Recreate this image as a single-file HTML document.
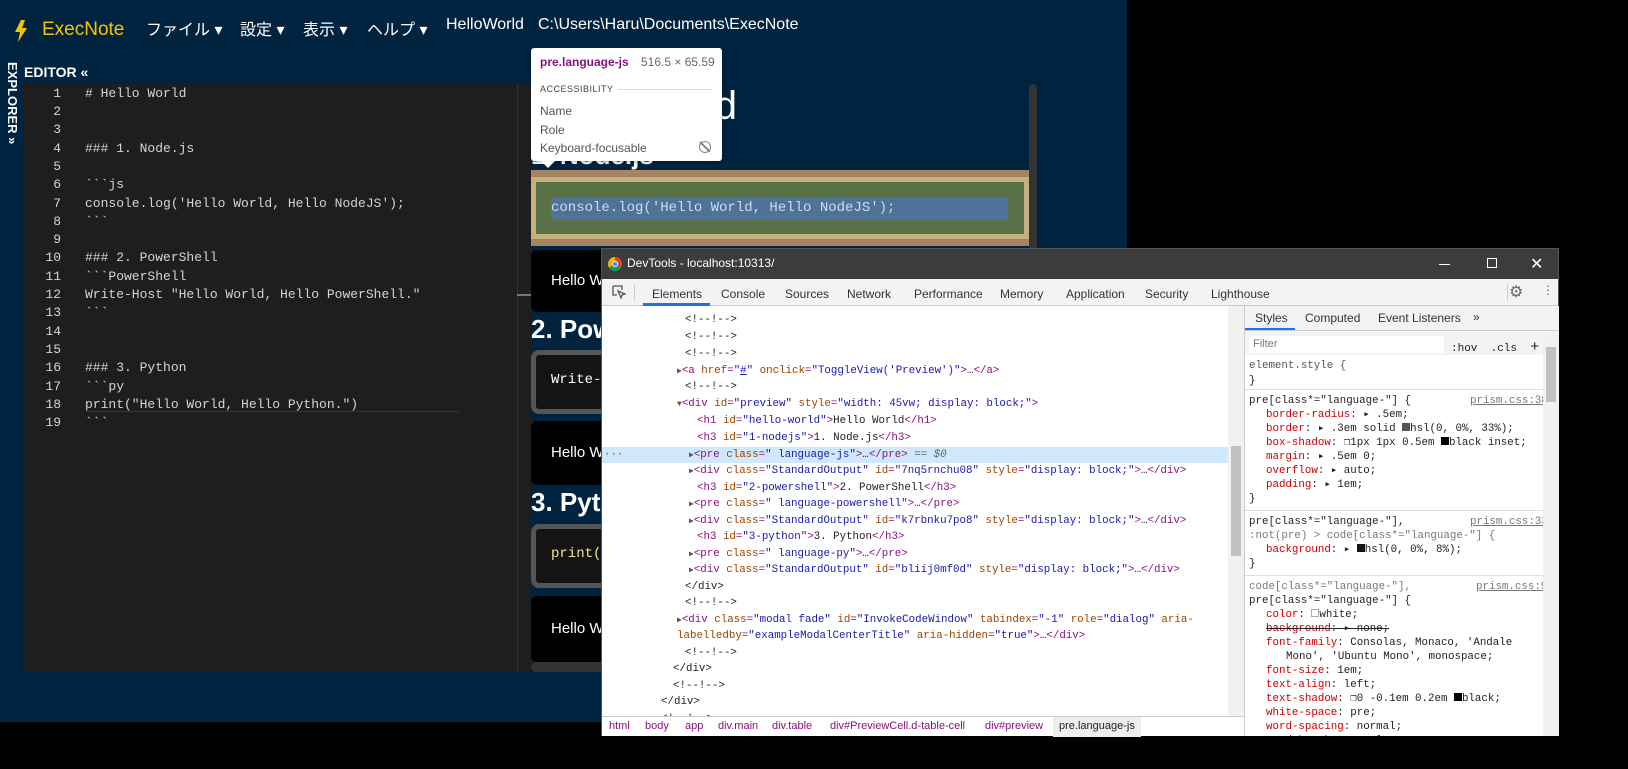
<!DOCTYPE html>
<html><head><meta charset="utf-8"><style>
*{margin:0;padding:0;box-sizing:border-box}
body{width:1628px;height:769px;background:#000;position:relative;overflow:hidden;font-family:"Liberation Sans","Noto Sans CJK JP",sans-serif}
.a{position:absolute}
.mono{font-family:"Liberation Mono","DejaVu Sans Mono",monospace}
#app{left:0;top:0;width:1127px;height:722px;background:#002340}
.nav{color:#fff;font-size:16px;top:16px}
.ln{color:#858585;width:37px;text-align:right;left:0}
.ed div{position:absolute;font-size:13px;color:#d4d4d4;white-space:pre}
.el div{position:absolute;white-space:pre;font-size:10.8px;color:#222;line-height:16px}
.t{color:#881280}.n{color:#994500}.v{color:#1a1aa6}.c{color:#236e25}
.tri{color:#555;font-size:8px}
.st div{position:absolute;white-space:pre;font-size:10.8px;color:#222;line-height:14px;height:14px}
.p{color:#c80000}
.tabs span{position:absolute;top:8px;font-size:12px;color:#333}
</style></head><body>
<div id="app" class="a">
  <svg class="a" style="left:14px;top:20px" width="14" height="22" viewBox="0 0 14 22"><path d="M7 0 L1 12 L6 12 L4 22 L13 8 L8 8 L11 0Z" fill="#f5c400"/></svg>
  <div class="a" style="left:42px;top:19px;font-size:19px;color:#f5c400">ExecNote</div>
  <div class="a nav" style="left:146px">ファイル ▾</div>
  <div class="a nav" style="left:240px">設定 ▾</div>
  <div class="a nav" style="left:303px">表示 ▾</div>
  <div class="a nav" style="left:367px">ヘルプ ▾</div>
  <div class="a nav" style="left:446px">HelloWorld</div>
  <div class="a nav" style="left:538px">C:\Users\Haru\Documents\ExecNote</div>
  <div class="a" style="left:24px;top:64px;color:#fff;font-weight:bold;font-size:14px">EDITOR «</div>
  <div class="a" style="left:2px;top:62px;width:18px;color:#fff;font-weight:bold;font-size:13px;writing-mode:vertical-rl">EXPLORER »</div>
  <div class="a ed mono" style="left:24px;top:84px;width:507px;height:588px;background:#1e1e1e">
    <div class="a" style="left:493px;top:0;width:1px;height:588px;background:#333"></div>
    <div class="a" style="left:62px;top:327px;width:374px;height:1px;background:#333"></div>
    <div class="a" style="left:493px;top:210px;width:14px;height:2px;background:#777"></div>
  </div>
  <div class="a ed mono" style="left:24px;top:84px">
    <div class="ln" style="top:2px">1</div><div class="ln" style="top:20px">2</div><div class="ln" style="top:38px">3</div><div class="ln" style="top:57px">4</div><div class="ln" style="top:75px">5</div><div class="ln" style="top:93px">6</div><div class="ln" style="top:112px">7</div><div class="ln" style="top:130px">8</div><div class="ln" style="top:148px">9</div><div class="ln" style="top:166px">10</div><div class="ln" style="top:185px">11</div><div class="ln" style="top:203px">12</div><div class="ln" style="top:221px">13</div><div class="ln" style="top:240px">14</div><div class="ln" style="top:258px">15</div><div class="ln" style="top:276px">16</div><div class="ln" style="top:295px">17</div><div class="ln" style="top:313px">18</div><div class="ln" style="top:331px">19</div>
    <div style="left:61px;top:2px"># Hello World</div>
    <div style="left:61px;top:57px">### 1. Node.js</div>
    <div style="left:61px;top:93px">&#96;&#96;&#96;js</div>
    <div style="left:61px;top:112px">console.log('Hello World, Hello NodeJS');</div>
    <div style="left:61px;top:130px">&#96;&#96;&#96;</div>
    <div style="left:61px;top:166px">### 2. PowerShell</div>
    <div style="left:61px;top:185px">&#96;&#96;&#96;PowerShell</div>
    <div style="left:61px;top:203px">Write-Host "Hello World, Hello PowerShell."</div>
    <div style="left:61px;top:221px">&#96;&#96;&#96;</div>
    <div style="left:61px;top:276px">### 3. Python</div>
    <div style="left:61px;top:295px">&#96;&#96;&#96;py</div>
    <div style="left:61px;top:313px">print("Hello World, Hello Python.")</div>
    <div style="left:61px;top:331px">&#96;&#96;&#96;</div>
  </div>
  <!-- preview -->
  <div class="a" style="left:531px;top:84px;width:509px;height:588px;overflow:hidden">
    <div class="a" style="left:0;top:0;color:#fff;font-size:40px">Hello World</div>
    <div class="a" style="left:0;top:56px;color:#fff;font-size:26px;font-weight:bold">1. Node.js</div>
    <div class="a" style="left:0;top:86px;width:498px;height:76px;background:#a48461"></div>
    <div class="a" style="left:0;top:93px;width:498px;height:62px;background:#c5b17f"></div>
    <div class="a" style="left:5px;top:98px;width:488px;height:52px;background:#5a7148"></div>
    <div class="a mono" style="left:20px;top:113px;width:457px;height:23px;background:#4f7398;color:#cde;font-size:14px;line-height:23px">console.log('Hello World, Hello NodeJS');</div>
    <div class="a" style="left:0;top:166px;width:498px;height:62px;background:#000;border-radius:6px;color:#fff;font-size:15px;padding:22px 20px">Hello World, Hello NodeJS</div>
    <div class="a" style="left:0;top:230px;color:#fff;font-size:26px;font-weight:bold">2. PowerShell</div>
    <div class="a mono" style="left:0;top:266px;width:498px;height:64px;background:#141414;border:5px solid #555;border-radius:8px;color:#fff;font-size:14px;padding:17px 15px">Write-Host "Hello World, Hello PowerShell."</div>
    <div class="a" style="left:0;top:337px;width:498px;height:64px;background:#000;border-radius:6px;color:#fff;font-size:15px;padding:23px 20px">Hello World, Hello PowerShell.</div>
    <div class="a" style="left:0;top:403px;color:#fff;font-size:26px;font-weight:bold">3. Python</div>
    <div class="a mono" style="left:0;top:440px;width:498px;height:64px;background:#141414;border:5px solid #555;border-radius:8px;color:#f0e68c;font-size:14px;padding:17px 15px">print("Hello World, Hello Python.")</div>
    <div class="a" style="left:0;top:512px;width:498px;height:66px;background:#000;border-radius:6px;color:#fff;font-size:15px;padding:24px 20px">Hello World, Hello Python.</div>
    <div class="a" style="left:0;top:578px;width:498px;height:10px;background:#333;border-radius:5px"></div>
    <div class="a" style="left:498px;top:0;width:8px;height:170px;background:#333;border-radius:4px"></div>
  </div>
  <!-- tooltip -->
  <div class="a" style="left:531px;top:48px;width:191px;height:113px;background:#fff;border-radius:3px;box-shadow:0 1px 4px rgba(0,0,0,.3)">
    <div class="a" style="left:9px;top:7px;font-size:12px;font-weight:bold;color:#881280">pre.language-js</div>
    <div class="a" style="left:110px;top:7px;font-size:12px;color:#666">516.5 × 65.59</div>
    <div class="a" style="left:9px;top:36px;font-size:9px;color:#444;letter-spacing:.5px">ACCESSIBILITY</div>
    <div class="a" style="left:87px;top:41px;width:95px;height:1px;background:#ddd"></div>
    <div class="a" style="left:9px;top:56px;font-size:12px;color:#555">Name</div>
    <div class="a" style="left:9px;top:75px;font-size:12px;color:#555">Role</div>
    <div class="a" style="left:9px;top:93px;font-size:12px;color:#555">Keyboard-focusable</div>
    <div class="a" style="left:168px;top:93px;width:12px;height:12px;border:1.5px solid #888;border-radius:50%"></div>
    <div class="a" style="left:173px;top:92px;width:1.5px;height:14px;background:#888;transform:rotate(-45deg)"></div>
    <div class="a" style="left:10px;top:113px;width:0;height:0;border-left:7px solid transparent;border-right:7px solid transparent;border-top:7px solid #fff"></div>
  </div>
</div>
<!-- devtools -->
<div class="a" style="left:601px;top:248px;width:958px;height:488px;background:#fff;border:1px solid #555">
  <div class="a" style="left:0;top:0;width:956px;height:30px;background:#3c3c3c">
    <div class="a" style="left:6px;top:8px;width:14px;height:14px;border-radius:50%;background:conic-gradient(#db4437 0 120deg,#0f9d58 120deg 240deg,#f4b400 240deg)"></div>
    <div class="a" style="left:10px;top:12px;width:6px;height:6px;border-radius:50%;background:#4285f4;border:1px solid #fff"></div>
    <div class="a" style="left:25px;top:7px;color:#fff;font-size:12px">DevTools - localhost:10313/</div>
    <div class="a" style="left:837px;top:15px;width:11px;height:1px;background:#fff"></div>
    <div class="a" style="left:885px;top:9px;width:10px;height:10px;border:1px solid #fff"></div>
    <div class="a" style="left:928px;top:5px;color:#fff;font-size:16px">✕</div>
  </div>
  <div class="a tabs" style="left:0;top:30px;width:956px;height:27px;background:#f3f3f3;border-bottom:1px solid #ccc">
    <svg class="a" style="left:10px;top:6px" width="14" height="14"><path d="M1 1h9v4M1 1v9h4M6 6l7 3-3 1-1 3z" fill="none" stroke="#555" stroke-width="1.3"/></svg>
    <div class="a" style="left:32px;top:5px;width:1px;height:17px;background:#ccc"></div>
    <span style="left:50px">Elements</span><div class="a" style="left:41px;top:24px;width:67px;height:3px;background:#1a73e8"></div>
    <span style="left:119px">Console</span><span style="left:183px">Sources</span><span style="left:245px">Network</span><span style="left:312px">Performance</span><span style="left:398px">Memory</span><span style="left:464px">Application</span><span style="left:543px">Security</span><span style="left:609px">Lighthouse</span>
    <div class="a" style="left:905px;top:5px;width:1px;height:17px;background:#ccc"></div>
    <span style="left:907px;top:3px;font-size:16px;color:#666">⚙</span><span style="left:940px;top:4px;color:#666">⋮</span>
  </div>
  <!-- elements -->
  <div class="a el mono" style="left:0;top:57px;width:626px;height:410px;overflow:hidden">
    <div style="left:0;top:141px;width:626px;height:16px;background:#cfe8fc"></div>
    <div style="left:2px;top:141px;color:#666">···</div>
    <div style="left:83px;top:6px" class="c">&lt;!--!--&gt;</div>
    <div style="left:83px;top:23px" class="c">&lt;!--!--&gt;</div>
    <div style="left:83px;top:40px" class="c">&lt;!--!--&gt;</div>
    <div style="left:75px;top:57px"><span class="tri">▶</span><span class="t">&lt;a</span> <span class="n">href</span><span class="t">=</span><span class="v">"<u>#</u>"</span> <span class="n">onclick</span><span class="t">=</span><span class="v">"ToggleView('Preview')"</span><span class="t">&gt;</span>…<span class="t">&lt;/a&gt;</span></div>
    <div style="left:83px;top:73px" class="c">&lt;!--!--&gt;</div>
    <div style="left:75px;top:90px"><span class="tri">▼</span><span class="t">&lt;div</span> <span class="n">id</span><span class="t">=</span><span class="v">"preview"</span> <span class="n">style</span><span class="t">=</span><span class="v">"width: 45vw; display: block;"</span><span class="t">&gt;</span></div>
    <div style="left:95px;top:107px"><span class="t">&lt;h1</span> <span class="n">id</span><span class="t">=</span><span class="v">"hello-world"</span><span class="t">&gt;</span>Hello World<span class="t">&lt;/h1&gt;</span></div>
    <div style="left:95px;top:124px"><span class="t">&lt;h3</span> <span class="n">id</span><span class="t">=</span><span class="v">"1-nodejs"</span><span class="t">&gt;</span>1. Node.js<span class="t">&lt;/h3&gt;</span></div>
    <div style="left:87px;top:141px"><span class="tri">▶</span><span class="t">&lt;pre</span> <span class="n">class</span><span class="t">=</span><span class="v">" language-js"</span><span class="t">&gt;</span>…<span class="t">&lt;/pre&gt;</span> <span style="color:#666">== <i>$0</i></span></div>
    <div style="left:87px;top:157px"><span class="tri">▶</span><span class="t">&lt;div</span> <span class="n">class</span><span class="t">=</span><span class="v">"StandardOutput"</span> <span class="n">id</span><span class="t">=</span><span class="v">"7nq5rnchu08"</span> <span class="n">style</span><span class="t">=</span><span class="v">"display: block;"</span><span class="t">&gt;</span>…<span class="t">&lt;/div&gt;</span></div>
    <div style="left:95px;top:174px"><span class="t">&lt;h3</span> <span class="n">id</span><span class="t">=</span><span class="v">"2-powershell"</span><span class="t">&gt;</span>2. PowerShell<span class="t">&lt;/h3&gt;</span></div>
    <div style="left:87px;top:190px"><span class="tri">▶</span><span class="t">&lt;pre</span> <span class="n">class</span><span class="t">=</span><span class="v">" language-powershell"</span><span class="t">&gt;</span>…<span class="t">&lt;/pre&gt;</span></div>
    <div style="left:87px;top:207px"><span class="tri">▶</span><span class="t">&lt;div</span> <span class="n">class</span><span class="t">=</span><span class="v">"StandardOutput"</span> <span class="n">id</span><span class="t">=</span><span class="v">"k7rbnku7po8"</span> <span class="n">style</span><span class="t">=</span><span class="v">"display: block;"</span><span class="t">&gt;</span>…<span class="t">&lt;/div&gt;</span></div>
    <div style="left:95px;top:223px"><span class="t">&lt;h3</span> <span class="n">id</span><span class="t">=</span><span class="v">"3-python"</span><span class="t">&gt;</span>3. Python<span class="t">&lt;/h3&gt;</span></div>
    <div style="left:87px;top:240px"><span class="tri">▶</span><span class="t">&lt;pre</span> <span class="n">class</span><span class="t">=</span><span class="v">" language-py"</span><span class="t">&gt;</span>…<span class="t">&lt;/pre&gt;</span></div>
    <div style="left:87px;top:256px"><span class="tri">▶</span><span class="t">&lt;div</span> <span class="n">class</span><span class="t">=</span><span class="v">"StandardOutput"</span> <span class="n">id</span><span class="t">=</span><span class="v">"bliij0mf0d"</span> <span class="n">style</span><span class="t">=</span><span class="v">"display: block;"</span><span class="t">&gt;</span>…<span class="t">&lt;/div&gt;</span></div>
    <div style="left:83px;top:273px" class="t">&lt;/div&gt;</div>
    <div style="left:83px;top:289px" class="c">&lt;!--!--&gt;</div>
    <div style="left:75px;top:306px"><span class="tri">▶</span><span class="t">&lt;div</span> <span class="n">class</span><span class="t">=</span><span class="v">"modal fade"</span> <span class="n">id</span><span class="t">=</span><span class="v">"InvokeCodeWindow"</span> <span class="n">tabindex</span><span class="t">=</span><span class="v">"-1"</span> <span class="n">role</span><span class="t">=</span><span class="v">"dialog"</span> <span class="n">aria-</span></div>
    <div style="left:75px;top:322px"><span class="n">labelledby</span><span class="t">=</span><span class="v">"exampleModalCenterTitle"</span> <span class="n">aria-hidden</span><span class="t">=</span><span class="v">"true"</span><span class="t">&gt;</span>…<span class="t">&lt;/div&gt;</span></div>
    <div style="left:83px;top:339px" class="c">&lt;!--!--&gt;</div>
    <div style="left:71px;top:355px" class="t">&lt;/div&gt;</div>
    <div style="left:71px;top:372px" class="c">&lt;!--!--&gt;</div>
    <div style="left:59px;top:388px" class="t">&lt;/div&gt;</div>
    <div style="left:59px;top:405px" class="c">&lt;!--!--&gt;</div>
  </div>
  <div class="a" style="left:626px;top:57px;width:16px;height:410px;background:#f1f1f1"><div class="a" style="left:3px;top:140px;width:10px;height:110px;background:#c1c1c1"></div></div>
  <div class="a" style="left:0;top:467px;width:642px;height:20px;background:#fff;border-top:1px solid #ccc;font-size:11px;color:#881280">
    <span class="a" style="left:7px;top:3px">html</span><span class="a" style="left:43px;top:3px">body</span><span class="a" style="left:83px;top:3px">app</span><span class="a" style="left:116px;top:3px">div.main</span><span class="a" style="left:170px;top:3px">div.table</span><span class="a" style="left:228px;top:3px">div#PreviewCell.d-table-cell</span><span class="a" style="left:383px;top:3px">div#preview</span>
    <span class="a" style="left:451px;top:0;height:20px;padding:3px 6px;background:#eee;color:#222">pre.language-js</span>
  </div>
  <!-- styles -->
  <div class="a" style="left:642px;top:57px;width:314px;height:430px;border-left:1px solid #ccc;background:#fff">
    <div class="a" style="left:0;top:0;width:314px;height:25px;background:#f3f3f3;border-bottom:1px solid #ccc;font-size:12px;color:#333">
      <span class="a" style="left:10px;top:5px">Styles</span><div class="a" style="left:0;top:22px;width:50px;height:2px;background:#1a73e8"></div>
      <span class="a" style="left:60px;top:5px">Computed</span><span class="a" style="left:133px;top:5px">Event Listeners</span><span class="a" style="left:228px;top:4px">»</span>
    </div>
    <div class="a" style="left:0;top:25px;width:298px;height:24px;background:#f3f3f3"></div>
    <div class="a" style="left:4px;top:30px;width:195px;height:17px;background:#fff;font-size:11px;color:#777;padding:2px 4px">Filter</div>
    <div class="a mono" style="left:206px;top:33px;font-size:11px;color:#222">:hov &nbsp;.cls &nbsp;<span style="font-size:15px">+</span></div>
    <div class="a st mono" style="left:0;top:50px;width:298px;height:380px;overflow:hidden">
      <div style="left:4px;top:3px;color:#555">element.style {</div><div style="left:4px;top:18px">}</div>
      <div style="left:0;top:33px;width:298px;height:1px;background:#ddd"></div>
      <div style="left:4px;top:38px">pre[class*="language-"] {</div><div style="left:225px;top:38px;color:#777;text-decoration:underline">prism.css:38</div>
      <div style="left:21px;top:52px"><span class="p">border-radius</span>: ▸ .5em;</div>
      <div style="left:21px;top:66px"><span class="p">border</span>: ▸ .3em solid <span style="display:inline-block;width:8px;height:8px;background:#545454"></span>hsl(0, 0%, 33%);</div>
      <div style="left:21px;top:80px"><span class="p">box-shadow</span>: ❐1px 1px 0.5em <span style="display:inline-block;width:8px;height:8px;background:#000"></span>black inset;</div>
      <div style="left:21px;top:94px"><span class="p">margin</span>: ▸ .5em 0;</div>
      <div style="left:21px;top:108px"><span class="p">overflow</span>: ▸ auto;</div>
      <div style="left:21px;top:122px"><span class="p">padding</span>: ▸ 1em;</div>
      <div style="left:4px;top:136px">}</div>
      <div style="left:0;top:154px;width:298px;height:1px;background:#ddd"></div>
      <div style="left:4px;top:159px">pre[class*="language-"],</div><div style="left:225px;top:159px;color:#777;text-decoration:underline">prism.css:33</div>
      <div style="left:4px;top:173px;color:#777">:not(pre) &gt; code[class*="language-"] {</div>
      <div style="left:21px;top:187px"><span class="p">background</span>: ▸ <span style="display:inline-block;width:8px;height:8px;background:#141414"></span>hsl(0, 0%, 8%);</div>
      <div style="left:4px;top:201px">}</div>
      <div style="left:0;top:219px;width:298px;height:1px;background:#ddd"></div>
      <div style="left:4px;top:224px;color:#777">code[class*="language-"],</div><div style="left:231px;top:224px;color:#777;text-decoration:underline">prism.css:9</div>
      <div style="left:4px;top:238px">pre[class*="language-"] {</div>
      <div style="left:21px;top:252px"><span class="p">color</span>: <span style="display:inline-block;width:8px;height:8px;border:1px solid #aaa"></span>white;</div>
      <div style="left:21px;top:266px;text-decoration:line-through"><span class="p">background</span>: ▸ none;</div>
      <div style="left:21px;top:280px"><span class="p">font-family</span>: Consolas, Monaco, 'Andale</div>
      <div style="left:41px;top:294px">Mono', 'Ubuntu Mono', monospace;</div>
      <div style="left:21px;top:308px"><span class="p">font-size</span>: 1em;</div>
      <div style="left:21px;top:322px"><span class="p">text-align</span>: left;</div>
      <div style="left:21px;top:336px"><span class="p">text-shadow</span>: ❐0 -0.1em 0.2em <span style="display:inline-block;width:8px;height:8px;background:#000"></span>black;</div>
      <div style="left:21px;top:350px"><span class="p">white-space</span>: pre;</div>
      <div style="left:21px;top:364px"><span class="p">word-spacing</span>: normal;</div>
      <div style="left:21px;top:378px"><span class="p">word-break</span>: normal;</div>
    </div>
    <div class="a" style="left:298px;top:25px;width:16px;height:405px;background:#f1f1f1"><div class="a" style="left:3px;top:16px;width:10px;height:55px;background:#c1c1c1"></div></div>
  </div>
</div>
</body></html>
